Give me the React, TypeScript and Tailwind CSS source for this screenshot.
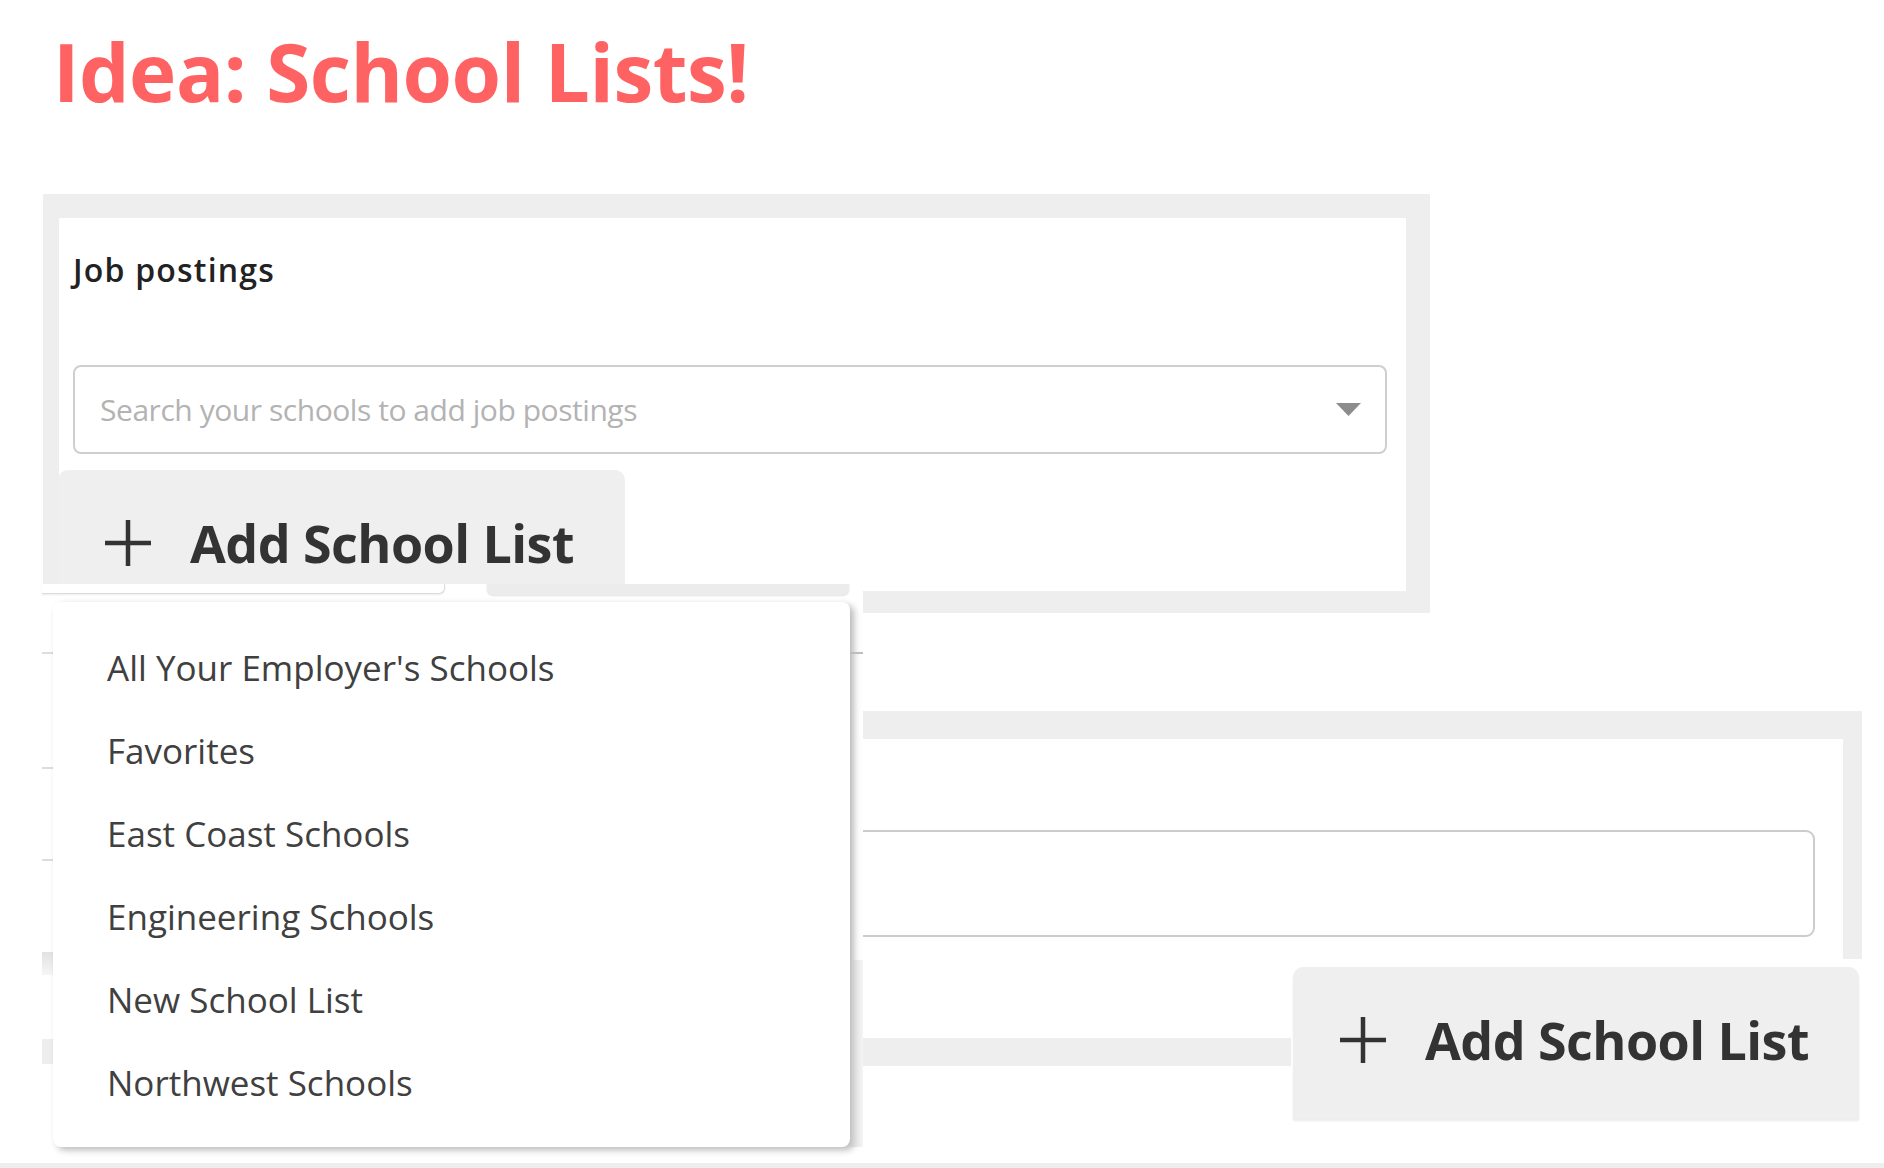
import React from "react";

function PlusIcon() {
  return (
    <svg width="46" height="46" viewBox="0 0 46 46" className="shrink-0">
      <path d="M23 0 V46 M0 23 H46" stroke="#333333" strokeWidth="4.5" fill="none" />
    </svg>
  );
}

function AddButton({ className }: { className: string }) {
  return (
    <div className={"flex items-start bg-[#efefef] rounded-t-[10px] " + className}>
      <div className="ml-[47px] mt-[50px]">
        <PlusIcon />
      </div>
      <span className="ml-[39px] mt-[47px] text-[52px] leading-[52px] font-bold tracking-[-0.55px] text-[#333333] whitespace-nowrap">
        Add School List
      </span>
    </div>
  );
}

const items = [
  "All Your Employer's Schools",
  "Favorites",
  "East Coast Schools",
  "Engineering Schools",
  "New School List",
  "Northwest Schools",
];

export default function App() {
  return (
    <div className="relative w-[1884px] h-[1168px] bg-white overflow-hidden flex flex-col font-['Open_Sans',sans-serif]">
      {/* Title */}
      <h1 className="ml-[53px] mt-[31px] h-[80px] text-[80px] leading-[80px] font-bold tracking-[-0.5px] text-[#ff6262] whitespace-nowrap">
        Idea: School Lists!
      </h1>

      {/* Panel 1 */}
      <div className="ml-[43px] mt-[83px] w-[1387px] h-[419px] shrink-0 bg-[#eeeeee] pt-[24px] pr-[24px] pb-[22px] pl-[16px]">
        <div className="h-full bg-white flex flex-col pl-[14px] pr-[19px] pt-[36px]">
          <div className="h-[32px] text-[32px] leading-[32px] font-semibold tracking-[1.2px] text-[#222222] whitespace-nowrap">
            Job postings
          </div>
          <div className="mt-[79px] h-[89px] shrink-0 border-2 border-[#cfcfcf] rounded-[8px] flex items-center justify-between pl-[25px] pr-[24px]">
            <span className="text-[30px] leading-[30px] tracking-[-0.45px] text-[#b3b3b3] whitespace-nowrap">
              Search your schools to add job postings
            </span>
            <svg width="25" height="13" viewBox="0 0 25 13">
              <polygon points="0,0 25,0 12.5,13" fill="#8c8c8c" />
            </svg>
          </div>
          <AddButton className="-ml-[15px] mt-[16px] w-[567px] h-[114px] shrink-0" />
        </div>
      </div>

      {/* Panel 2 */}
      <div className="ml-[43px] mt-[98px] w-[1819px] h-[355px] shrink-0 bg-[#eeeeee] pt-[28px] pr-[19px] pb-[28px] pl-[16px]">
        <div className="h-full bg-white pl-[17px] pr-[28px] pt-[91px]">
          <div className="h-[107px] border-2 border-[#cccccc] rounded-[9px]" />
        </div>
      </div>

      {/* bottom rule */}
      <div className="mt-auto h-[5px] w-full bg-[#eeeeee] shrink-0" />

      {/* Second Add School List button (pasted over panel 2) */}
      <div className="absolute left-[1291px] top-[959px] w-[571px] h-[163px] bg-white">
        <AddButton className="ml-[2px] mt-[8px] w-[566px] h-[152px] shadow-[0_2px_2px_rgba(0,0,0,0.08)]" />
      </div>

      {/* Dropdown menu overlay */}
      <div className="absolute left-[42px] top-[584px] w-[821px] h-[576px] bg-white flex flex-col">
        <div className="h-[10px] flex shrink-0">
          <div className="w-[403px] h-[10px] bg-white rounded-br-[6px] border-b border-r border-[#dcdcdc] shadow-[0_1px_2px_rgba(0,0,0,0.08)]" />
          <div className="w-[42px]" />
          <div className="w-[362px] h-[11px] bg-[#ececec] rounded-b-[6px] shadow-[0_1px_2px_rgba(0,0,0,0.12)]" />
        </div>
        <div className="mt-[8px] h-[545px] flex shrink-0">
          <div className="w-[11px] flex flex-col shrink-0">
            <div className="mt-[50px] h-[2px] bg-[#dddddd]" />
            <div className="mt-[113px] h-[2px] bg-[#dddddd]" />
            <div className="mt-[90px] h-[2px] bg-[#dddddd]" />
            <div className="mt-[91px] h-[23px] bg-gradient-to-b from-[#e2e2e2] to-[#f6f6f6]" />
            <div className="mt-[64px] h-[25px] bg-[#eeeeee]" />
          </div>
          <div className="w-[797px] h-full shrink-0 bg-white rounded-[8px] shadow-[4px_3px_7px_rgba(0,0,0,0.28)] pt-[24px] pl-[54px] relative z-10">
            {items.map((t) => (
              <div key={t} className="h-[83px] text-[35px] leading-[83px] text-[#404040] whitespace-nowrap">
                {t}
              </div>
            ))}
          </div>
          <div className="w-[13px] flex flex-col shrink-0 relative z-20">
            <div className="mt-[50px] h-[2px] bg-[#bdbdbd]" />
            <div className="mt-[306px] h-[200px] bg-gradient-to-r from-[#c4c4c4] to-[#eeeeee] opacity-60" />
          </div>
        </div>
      </div>
    </div>
  );
}
